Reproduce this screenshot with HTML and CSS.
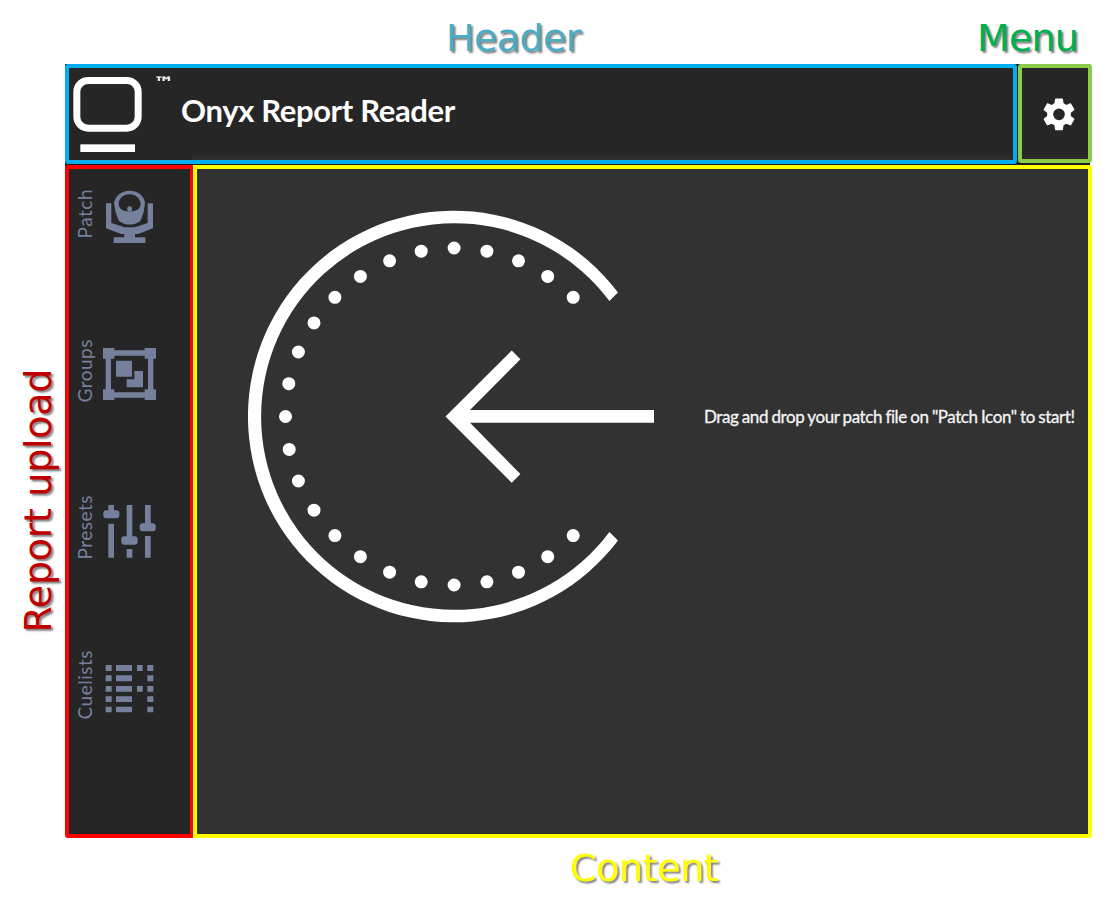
FILE: index.html
```html
<!DOCTYPE html>
<html lang="en">
<head>
<meta charset="utf-8">
<title>Onyx Report Reader</title>
<link rel="stylesheet" href="styles.css">
</head>
<body>
<div class="page">
  <div class="top-notes">
    <span class="note note-header">Header</span>
    <span class="note note-menu">Menu</span>
  </div>
  <div class="side-note"><span class="note note-upload">Report upload</span></div>
  <div class="app">
    <header class="header">
      <svg class="logo" viewBox="54 60 207 240">
        <rect x="65.500" y="76.500" width="184" height="143" rx="34" fill="none" stroke="#fff" stroke-width="21"/>
        <rect x="76" y="268" width="164" height="23" fill="#fff"/>
      </svg>
      <span class="tm">™</span>
      <h1 class="title">Onyx Report Reader</h1>
    </header>
    <button class="menu" aria-label="Menu">
      <svg class="gear" viewBox="0 0 24 24"><path fill="#fff" d="M12 15.700a3.700 3.700 0 1 1 0-7.400 3.700 3.700 0 0 1 0 7.400m7.430-2.730c.04-.32.07-.64.07-.97s-.03-.66-.07-1l2.110-1.630c.19-.15.24-.42.12-.64l-2-3.460c-.12-.22-.39-.31-.61-.22l-2.490 1c-.52-.39-1.060-.73-1.690-.98l-.37-2.650A.506.506 0 0 0 14 2h-4c-.25 0-.46.18-.5.42l-.37 2.650c-.63.25-1.170.59-1.690.98l-2.490-1c-.22-.09-.49 0-.61.22l-2 3.460c-.13.22-.07.49.12.64L4.570 11c-.04.34-.07.67-.07 1s.03.65.07.970l-2.110 1.660c-.19.15-.25.42-.12.64l2 3.460c.12.22.39.3.61.22l2.490-1.010c.52.4 1.060.74 1.690.99l.37 2.650c.04.24.25.42.5.42h4c.25 0 .46-.18.5-.42l.37-2.650c.63-.26 1.170-.59 1.690-.99l2.490 1.010c.22.08.49 0 .61-.22l2-3.460c.12-.22.07-.49-.12-.64z"/></svg>
    </button>
    <nav class="sidebar">
      <div class="item"><span class="label">Patch</span>
        <svg class="icon" viewBox="126 90 162 162">
          <path fill-rule="evenodd" d="M209 92C234 92 253 108 255 130Q253 157 244 177C236 199 182 199 174 177Q165 157 162 130C165 107 185 92 209 92M209 103C189 103 176 117 176 132C177 148 191 154 209 154S241 148 242 132C241 117 229 103 209 103"/>
          <circle cx="209" cy="146" r="7.500"/>
          <path d="M138 130h16v59l40 13h30l39-13v-59h16v75l-44 17h-10v10h31v17h-95v-17h32v-10h-10l-45-17z"/>
        </svg></div>
      <div class="item"><span class="label">Groups</span>
        <svg class="icon" viewBox="126 51 162 162">
          <path fill-rule="evenodd" d="M129 54h34v7h91v-7h34v32h-8v92h8v32h-34v-7h-91v7h-34v-32h8V86h-8zM163 77v9h-10v92h10v9h91v-9h10V86h-10v-9z"/>
          <path d="M168 92h48v48h-48zM223 123h26v49h-49v-24h23z"/>
        </svg></div>
      <div class="item"><span class="label">Presets</span>
        <svg class="icon" viewBox="126 57 162 162">
          <path d="M145 60h17v20h-17zM145 116h17v102h-17zM200 60h17v100h-17zM200 192h17v26h-17zM255 60h17v60h-17zM255 153h17v65h-17z"/>
          <rect x="130" y="76" width="48" height="24" rx="9"/><rect x="184" y="154" width="49" height="25" rx="9"/><rect x="239" y="115" width="48" height="24" rx="9"/>
        </svg></div>
      <div class="item"><span class="label">Cuelists</span>
        <svg class="icon" viewBox="126 63 162 162">
          <path d="M137 75h18v18h-18zm0 31h18v18h-18zm0 32h18v17h-18zm0 31h18v17h-18zm0 31h18v17h-18zM168 75h48v18h-48zm0 31h48v18h-48zm0 32h48v17h-48zm0 31h48v17h-48zm0 31h48v17h-48zM231 75h17v18h-17zm0 63h17v17h-17zM262 75h18v18h-18zm0 31h18v18h-18zm0 32h18v17h-18zm0 31h18v17h-18zm0 31h18v17h-18z"/>
        </svg></div>
    </nav>
    <main class="content">
      <svg class="drop" viewBox="248 210 406 413">
        <path fill="#fff" d="M618 292.500A205.800 205.800 0 1 0 618 540.500L609.400 532A193.300 193.300 0 1 1 609.400 301ZM445.500 416.500L511.700 350.500L520.400 359.200L470 410H654V422.800H470L520.400 474L511.700 482.700Z"/>
        <path fill="none" stroke="#fff" stroke-width="13" stroke-linecap="round" d="M573.200 297.300h.01M547.700 276.400h.01M518.500 260.800h.01M486.900 251.200h.01M454.100 248h.01M421.200 251.200h.01M389.600 260.800h.01M360.400 276.400h.01M334.900 297.300h.01M314 322.900h.01M298.400 352h.01M288.800 383.700h.01M285.500 416.500h.01M289.200 449.400h.01M298.400 481h.01M314 510.200h.01M334.900 535.600h.01M360.400 556.700h.01M389.600 572.200h.01M421.200 581.800h.01M454.100 585h.01M486.900 581.800h.01M518.500 572.200h.01M547.700 556.700h.01M573.200 535.600h.01"/>
      </svg>
      <p class="hint">Drag and drop your patch file on "Patch Icon" to start!</p>
    </main>
  </div>
  <div class="bottom-note"><span class="note note-content">Content</span></div>
</div>
</body>
</html>
```
FILE: styles.css
```css
* { box-sizing: border-box; }
body { margin: 0; background: #fff; }
.page {
  width: 1106px; height: 916px; overflow: hidden;
  display: grid;
  grid-template-columns: 65px 1027px;
  grid-template-rows: 64px 774px 78px;
}
.note {
  font: 38px/52px "DejaVu Sans", Verdana, sans-serif;
  text-shadow: 2px 2px 2px rgba(0,0,0,.5);
  white-space: nowrap;
}
.top-notes { grid-column: 1 / 3; display: flex; padding-top: 12px; }
.note-header { color: #4bacc6; margin-left: 446px; width: 531px; letter-spacing: -.6px; }
.note-menu { color: #00b050; letter-spacing: -.8px; }
.side-note { display: flex; align-items: flex-end; padding: 0 0 205px 12px; }
.note-upload {
  color: #c00000; writing-mode: vertical-rl; transform: rotate(180deg);
  text-shadow: -2px 2px 2px rgba(0,0,0,.5); letter-spacing: -.3px;
}
.bottom-note { grid-column: 1 / 3; padding: 4px 0 0 570px; }
.note-content { color: #ff0; letter-spacing: -.4px; }
.app {
  background: linear-gradient(#1c1c1c, #1c1c1c) 0 0 / 1025px 772px no-repeat;
  display: grid;
  grid-template-columns: 128px 824px 1px 74px;
  grid-template-rows: 100px 1px 673px;
}
.header {
  grid-column: 1 / 3; display: flex; align-items: flex-start;
  border: 4px solid #00adef; border-radius: 3px;
  background: linear-gradient(#262626 0, #262626 85px, #2e2e2e 92px) 123px 0 no-repeat #262626;
  padding: 7px 0 0 4px; color: #fff;
}
.logo { width: 69px; height: 80px; flex: none; }
.tm { width: 18px; margin: -1px 0 0 11px; font: bold 16px/18px "DejaVu Sans", sans-serif; transform: scaleX(1.35); transform-origin: 0 0; }
.title { margin: 17px 0 0 10px; font: bold 31px/36px Lato, sans-serif; letter-spacing: -.35px; white-space: nowrap; }
.menu {
  grid-column: 4; height: 99px; margin: 0;
  border: 4px solid #8bcb4a; border-radius: 3px;
  background: linear-gradient(#262626 85px, #2e2e2e 92px);
  display: flex; justify-content: center; padding: 27px 0 0 7px; align-items: flex-start;
}
.gear { width: 38px; height: 38.700px; flex: none; }
.sidebar {
  grid-column: 1; grid-row: 3;
  background: #262626; border: 4px solid #f00; border-right-width: 3px; border-radius: 3px 0 0 3px;
  padding: 21px 0 0 5px; display: flex; flex-direction: column; gap: 103px;
}
.item { height: 54px; display: flex; align-items: center; color: #75819c; }
.label {
  writing-mode: vertical-rl; transform: rotate(180deg);
  width: 28px; padding-top: 7px; flex: none;
  font: 19px/22px Lato, sans-serif; letter-spacing: .5px; white-space: nowrap;
}
.icon { width: 54px; height: 54px; flex: none; fill: #75819c; }
.content {
  grid-column: 2 / 5; grid-row: 3;
  background: #323232; border: 4px solid #ff0; border-radius: 0 3px 3px 0;
  padding: 41px 0 0 51px; display: flex; align-items: flex-start;
}
.drop { width: 406px; height: 413px; flex: none; }
.hint {
  margin: 196px 0 0 50px; font: 17px/22px Lato, sans-serif;
  letter-spacing: -.42px; word-spacing: -.5px; color: #f4f4f4;
  -webkit-text-stroke: .3px #f4f4f4; white-space: nowrap;
}
```
